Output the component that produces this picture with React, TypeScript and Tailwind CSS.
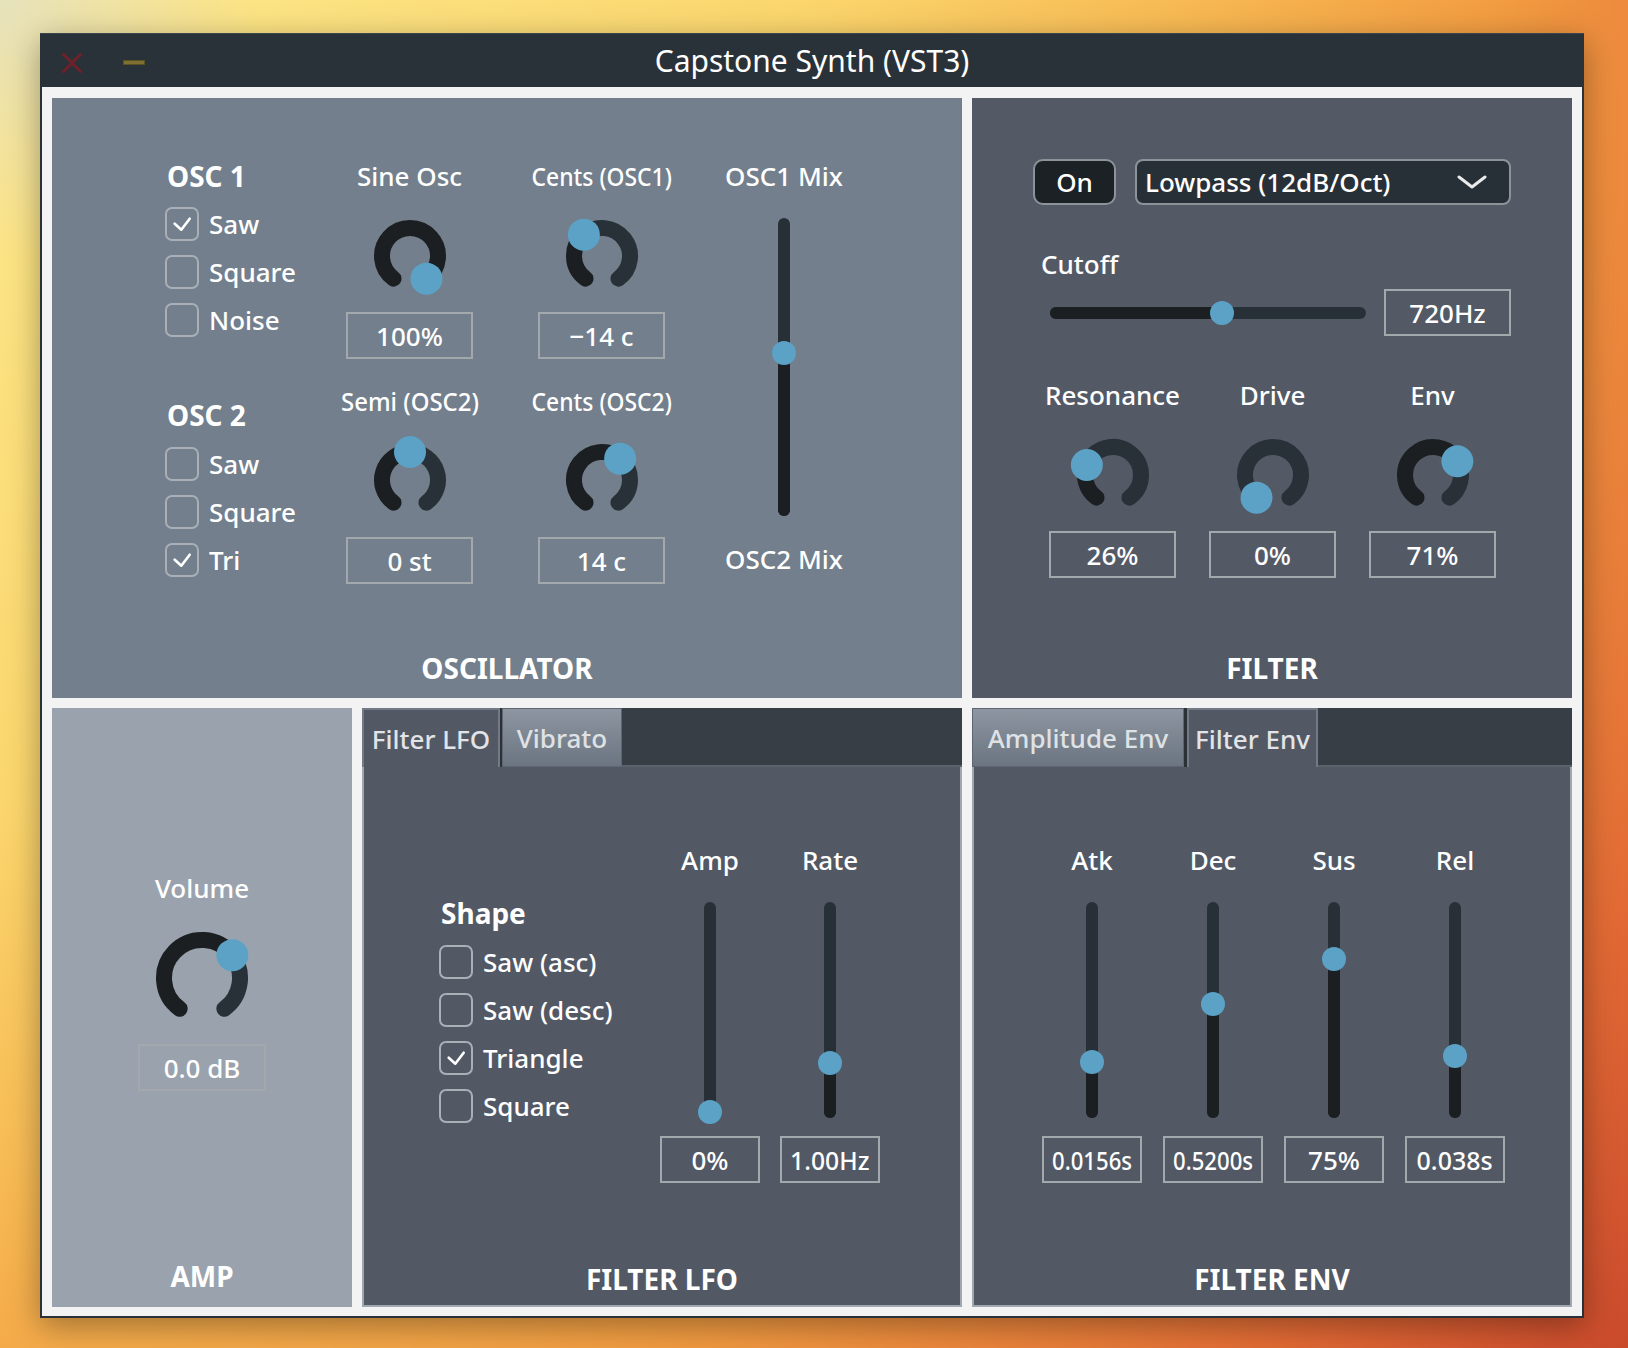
import React from "react";

const THUMB = "#5ba2c6";
const DARK = "#1b1f22";
const MID = "#293138";

function polar(c: number, r: number, deg: number): [number, number] {
  const a = (deg * Math.PI) / 180;
  return [c + r * Math.sin(a), c - r * Math.cos(a)];
}
function arcPath(c: number, r: number, from: number, to: number) {
  const [x0, y0] = polar(c, r, from);
  const [x1, y1] = polar(c, r, to);
  const large = to - from > 180 ? 1 : 0;
  return `M ${x0} ${y0} A ${r} ${r} 0 ${large} 1 ${x1} ${y1}`;
}

function Knob({ v, big = false }: { v: number; big?: boolean }) {
  const S = big ? 112 : 96;
  const R = big ? 38 : 28;
  const c = S / 2;
  const a0 = -144;
  const a1 = 144;
  const av = a0 + v * 288;
  const [tx, ty] = polar(c, R, av);
  return (
    <svg width={S} height={S} viewBox={`0 0 ${S} ${S}`} className="block overflow-visible">
      {av < a1 - 0.5 && (
        <path d={arcPath(c, R, av, a1)} fill="none" stroke={MID} strokeWidth={16} strokeLinecap="round" />
      )}
      {av > a0 + 0.5 && (
        <path d={arcPath(c, R, a0, av)} fill="none" stroke={DARK} strokeWidth={16} strokeLinecap="round" />
      )}
      <circle cx={tx} cy={ty} r={16} fill={THUMB} />
    </svg>
  );
}

function VSlider({ h, t }: { h: number; t: number }) {
  return (
    <svg width={24} height={h} viewBox={`0 0 24 ${h}`} className="block overflow-visible">
      <line x1={12} y1={6} x2={12} y2={h - 6} stroke="#283037" strokeWidth={12} strokeLinecap="round" />
      <line x1={12} y1={t} x2={12} y2={h - 6} stroke={DARK} strokeWidth={12} strokeLinecap="round" />
      <circle cx={12} cy={t} r={12} fill={THUMB} />
    </svg>
  );
}

function HSlider({ w, t }: { w: number; t: number }) {
  return (
    <svg width={w} height={24} viewBox={`0 0 ${w} 24`} className="block overflow-visible">
      <line x1={6} y1={12} x2={w - 6} y2={12} stroke="#283037" strokeWidth={12} strokeLinecap="round" />
      <line x1={6} y1={12} x2={t} y2={12} stroke={DARK} strokeWidth={12} strokeLinecap="round" />
      <circle cx={t} cy={12} r={12} fill={THUMB} />
    </svg>
  );
}

function Check({ on = false, label }: { on?: boolean; label: string }) {
  return (
    <div className="flex h-[48px] items-center">
      <div className="flex h-[34px] w-[34px] shrink-0 items-center justify-center rounded-[7px] border-2 border-[#a9afb5]">
        {on && (
          <svg width="30" height="30" viewBox="0 0 30 30" className="block">
            <path
              d="M7.7 14.7 L14.3 20.7 L22.7 9.7"
              fill="none"
              stroke="white"
              strokeWidth="2.6"
              strokeLinecap="round"
              strokeLinejoin="round"
            />
          </svg>
        )}
      </div>
      <span className="ml-[10px] whitespace-nowrap text-[26px] leading-[36px] text-white">{label}</span>
    </div>
  );
}

function Label({ children, cls = "", sx = "" }: { children: React.ReactNode; cls?: string; sx?: string }) {
  return (
    <div className={`flex h-[36px] items-center justify-center whitespace-nowrap text-[26px] leading-[36px] text-white ${cls}`}>
      <span className={`inline-block ${sx}`}>{children}</span>
    </div>
  );
}

function VBox({ children, cls = "", sx = "" }: { children: React.ReactNode; cls?: string; sx?: string }) {
  return (
    <div
      className={`flex h-[47px] shrink-0 items-center justify-center whitespace-nowrap border-2 border-[#a3a8ad] text-[26px] leading-[36px] text-white ${cls}`}
    >
      <span className={`inline-block ${sx}`}>{children}</span>
    </div>
  );
}

function Heading({ children, cls = "" }: { children: React.ReactNode; cls?: string }) {
  return <div className={`h-[36px] text-[28px] font-bold leading-[36px] text-white ${cls}`}>{children}</div>;
}

function ActiveTab({ children, cls = "" }: { children: React.ReactNode; cls?: string }) {
  return (
    <div
      className={`flex items-center justify-center border-x-2 border-t-2 border-[#727a85] bg-[#525965] text-[26px] leading-[36px] text-[#e2e4e7] ${cls}`}
    >
      {children}
    </div>
  );
}

function InactiveTab({ children, cls = "" }: { children: React.ReactNode; cls?: string }) {
  return (
    <div
      className={`flex items-center justify-center border border-[#5d6671] bg-linear-to-b from-[#8d96a1] to-[#6b7581] text-[26px] leading-[36px] text-[#dfe2e5] ${cls}`}
    >
      {children}
    </div>
  );
}

function KnobCol({
  label,
  v,
  value,
  sx = "",
  cls = "",
}: {
  label: string;
  v: number;
  value: string;
  sx?: string;
  cls?: string;
}) {
  return (
    <div className={`flex w-[127px] flex-col items-center ${cls}`}>
      <Label sx={sx}>{label}</Label>
      <div className="mt-[14px]">
        <Knob v={v} />
      </div>
      <VBox cls="mt-[8px] w-[127px]">{value}</VBox>
    </div>
  );
}

function SliderCol({ label, t, value, sx = "" }: { label: string; t: number; value: string; sx?: string }) {
  return (
    <div className="flex w-[100px] flex-col items-center">
      <Label>{label}</Label>
      <div className="mt-[24px]">
        <VSlider h={216} t={t} />
      </div>
      <VBox cls="mt-[18px] w-[100px]" sx={sx}>
        {value}
      </VBox>
    </div>
  );
}

function OscPanel() {
  return (
    <div className="flex h-[600px] w-[910px] flex-col bg-[#737f8c]">
      <div className="flex pt-[60px]">
        <div className="ml-[113px] w-[181px]">
          <Heading cls="pl-[2px]">OSC 1</Heading>
          <div className="mt-[6px]">
            <Check on label="Saw" />
            <Check label="Square" />
            <Check label="Noise" />
          </div>
          <Heading cls="mt-[53px] pl-[2px]">OSC 2</Heading>
          <div className="mt-[7px]">
            <Check label="Saw" />
            <Check label="Square" />
            <Check on label="Tri" />
          </div>
        </div>

        <div className="flex w-[127px] flex-col items-center">
          <Label>Sine Osc</Label>
          <div className="mt-[14px]">
            <Knob v={1} />
          </div>
          <VBox cls="mt-[8px] w-[127px]">100%</VBox>
          <Label cls="mt-[24px]" sx="scale-x-[0.92]">
            Semi (OSC2)
          </Label>
          <div className="mt-[13px]">
            <Knob v={0.5} />
          </div>
          <VBox cls="mt-[9px] w-[127px]">0 st</VBox>
        </div>

        <div className="ml-[65px] flex w-[127px] flex-col items-center">
          <Label sx="scale-x-[0.88]">Cents (OSC1)</Label>
          <div className="mt-[14px]">
            <Knob v={0.36} />
          </div>
          <VBox cls="mt-[8px] w-[127px]">−14 c</VBox>
          <Label cls="mt-[24px]" sx="scale-x-[0.88]">
            Cents (OSC2)
          </Label>
          <div className="mt-[13px]">
            <Knob v={0.64} />
          </div>
          <VBox cls="mt-[9px] w-[127px]">14 c</VBox>
        </div>

        <div className="ml-[49px] flex w-[140px] flex-col items-center">
          <Label>OSC1 Mix</Label>
          <div className="mt-[24px]">
            <VSlider h={298} t={135} />
          </div>
          <Label cls="mt-[25px]">OSC2 Mix</Label>
        </div>
      </div>
      <Heading cls="mt-auto mb-[12px] text-center">OSCILLATOR</Heading>
    </div>
  );
}

function FilterPanel() {
  return (
    <div className="flex h-[600px] w-[600px] flex-col bg-[#535a66]">
      <div className="ml-[61px] mt-[61px] flex gap-[19px]">
        <div className="flex h-[46px] w-[83px] items-center justify-center rounded-[10px] border-2 border-[#8d9399] bg-[#1c2125] text-[26px] leading-[36px] text-white">
          On
        </div>
        <div className="flex h-[46px] w-[376px] items-center justify-between rounded-[8px] border-2 border-[#8d9399] bg-[#283037] pl-[8px] pr-[22px] text-[26px] leading-[36px] text-white">
          <span className="whitespace-nowrap">Lowpass (12dB/Oct)</span>
          <svg width="30" height="16" viewBox="0 0 30 16" className="block">
            <path d="M2 3 L15 13 L28 3" fill="none" stroke="#e8eaec" strokeWidth="3" strokeLinecap="round" strokeLinejoin="round" />
          </svg>
        </div>
      </div>
      <div className="ml-[69px] mt-[41px] h-[36px] text-[26px] leading-[36px] text-white">Cutoff</div>
      <div className="ml-[78px] mt-[7px] flex items-center">
        <HSlider w={316} t={172} />
        <VBox cls="ml-[18px] w-[127px]">720Hz</VBox>
      </div>
      <div className="ml-[77px] mt-[41px] flex gap-[33px]">
        <KnobCol label="Resonance" v={0.26} value="26%" />
        <KnobCol label="Drive" v={0} value="0%" />
        <KnobCol label="Env" v={0.71} value="71%" />
      </div>
      <Heading cls="mt-auto mb-[12px] text-center">FILTER</Heading>
    </div>
  );
}

function AmpPanel() {
  return (
    <div className="flex h-[599px] w-[300px] flex-col items-center bg-[#9aa3ad]">
      <Label cls="mt-[162px]">Volume</Label>
      <div className="mt-[16px]">
        <Knob big v={0.684} />
      </div>
      <VBox cls="mt-[10px] w-[128px] border-[#8e969f]">0.0 dB</VBox>
      <Heading cls="mt-auto mb-[13px] text-center">AMP</Heading>
    </div>
  );
}

function LfoPanel() {
  return (
    <div className="flex h-[599px] w-[600px] flex-col">
      <div className="flex h-[59px] bg-[#383e46]">
        <ActiveTab cls="w-[138px]">Filter LFO</ActiveTab>
        <div className="w-[2px] bg-[#2b3137]" />
        <InactiveTab cls="w-[120px]">Vibrato</InactiveTab>
        <div className="flex-1 border-b-2 border-[#5a626c]" />
      </div>
      <div className="flex flex-1 flex-col border-x-2 border-b-2 border-[#a0a7ae] bg-[#525965]">
        <div className="flex items-start">
          <div className="ml-[75px] mt-[128px] w-[180px]">
            <Heading cls="pl-[2px]">Shape</Heading>
            <div className="mt-[7px]">
              <Check label="Saw (asc)" />
              <Check label="Saw (desc)" />
              <Check on label="Triangle" />
              <Check label="Square" />
            </div>
          </div>
          <div className="ml-[41px] mt-[75px] flex gap-[20px]">
            <SliderCol label="Amp" t={210} value="0%" />
            <SliderCol label="Rate" t={161} value="1.00Hz" sx="scale-x-[0.95]" />
          </div>
        </div>
        <Heading cls="mt-auto mb-[8px] text-center">FILTER LFO</Heading>
      </div>
    </div>
  );
}

function EnvPanel() {
  return (
    <div className="flex h-[599px] w-[600px] flex-col">
      <div className="flex h-[59px] bg-[#383e46]">
        <InactiveTab cls="w-[212px]">Amplitude Env</InactiveTab>
        <div className="w-[3px] bg-[#2b3137]" />
        <ActiveTab cls="w-[131px]">Filter Env</ActiveTab>
        <div className="flex-1 border-b-2 border-[#5a626c]" />
      </div>
      <div className="flex flex-1 flex-col border-x-2 border-b-2 border-[#a0a7ae] bg-[#525965]">
        <div className="ml-[68px] mt-[75px] flex gap-[21px]">
          <SliderCol label="Atk" t={160} value="0.0156s" sx="scale-x-[0.85]" />
          <SliderCol label="Dec" t={102} value="0.5200s" sx="scale-x-[0.85]" />
          <SliderCol label="Sus" t={57} value="75%" />
          <SliderCol label="Rel" t={154} value="0.038s" sx="scale-x-[0.96]" />
        </div>
        <Heading cls="mt-auto mb-[8px] text-center">FILTER ENV</Heading>
      </div>
    </div>
  );
}

function TitleBar() {
  return (
    <div className="grid h-[54px] grid-cols-[1fr_auto_1fr] items-center border-t border-[#3c464e] bg-[#2a3239]">
      <div className="flex items-center pl-[22px] pt-[4px]">
        <svg width="20" height="20" viewBox="0 0 20 20" className="block">
          <path d="M1.5 1.5 L18.5 18.5 M18.5 1.5 L1.5 18.5" stroke="#6f2028" strokeWidth="3" strokeLinecap="round" />
        </svg>
        <div className="ml-[41px] h-[5px] w-[22px] border border-[#5b5224] bg-[#7e712f]" />
      </div>
      <div className="whitespace-nowrap text-[30px] font-normal leading-[40px] text-white">Capstone Synth (VST3)</div>
      <div />
    </div>
  );
}

export default function App() {
  return (
    <div className="h-[1348px] w-[1628px] overflow-hidden bg-[radial-gradient(circle_at_0%_0%,#e6e2bc_0px,#fce383_260px,#fbd66d_800px,#f7b852_1200px,#f29c41_1500px,#e36b35_1850px,#c6452b_2150px)] pl-[40px] pt-[33px] font-['Noto_Sans',sans-serif] font-medium">
      <div className="w-[1544px] shadow-[0_8px_30px_rgba(0,0,0,0.35)]">
        <TitleBar />
        <div className="border-x-2 border-b-2 border-[#2a3239] bg-[#f3f3f3] px-[10px] pb-[9px] pt-[11px]">
          <div className="flex gap-[10px]">
            <OscPanel />
            <FilterPanel />
          </div>
          <div className="mt-[10px] flex gap-[10px]">
            <AmpPanel />
            <LfoPanel />
            <EnvPanel />
          </div>
        </div>
      </div>
    </div>
  );
}
